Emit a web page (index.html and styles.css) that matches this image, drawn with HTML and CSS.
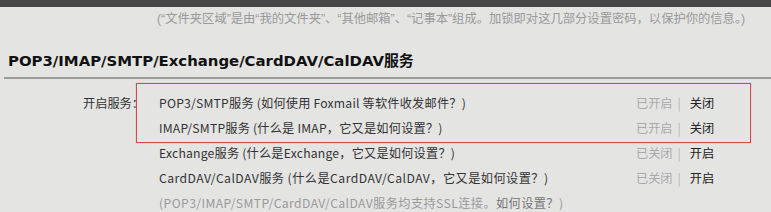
FILE: index.html
```html
<!DOCTYPE html>
<html lang="zh-CN">
<head>
<meta charset="utf-8">
<title>POP3/IMAP/SMTP/Exchange/CardDAV/CalDAV服务</title>
<link rel="stylesheet" href="styles.css">
</head>
<body>
<div class="page">
  <div class="topbar"></div>
  <div class="note">(“文件夹区域”是由“我的文件夹”、“其他邮箱”、“记事本”组成。加锁即对这几部分设置密码，以保护你的信息。)</div>
  <h2 class="section-title">POP3/IMAP/SMTP/Exchange/CardDAV/CalDAV服务</h2>
  <div class="services">
    <div class="label">开启服务：</div>
    <div class="list">
      <div class="row">
        <span class="name">POP3/SMTP服务 (如何使用 Foxmail 等软件收发邮件？)</span>
        <span class="status"><span class="state">已开启</span><span class="sep">|</span><span class="action">关闭</span></span>
      </div>
      <div class="row">
        <span class="name">IMAP/SMTP服务 (什么是 IMAP，它又是如何设置？)</span>
        <span class="status"><span class="state">已开启</span><span class="sep">|</span><span class="action">关闭</span></span>
      </div>
      <div class="row">
        <span class="name">Exchange服务 (什么是Exchange，它又是如何设置？)</span>
        <span class="status"><span class="state">已关闭</span><span class="sep">|</span><span class="action">开启</span></span>
      </div>
      <div class="row">
        <span class="name wide">CardDAV/CalDAV服务 (什么是CardDAV/CalDAV，它又是如何设置？)</span>
        <span class="status"><span class="state">已关闭</span><span class="sep">|</span><span class="action">开启</span></span>
      </div>
      <div class="row hint">(POP3/IMAP/SMTP/CardDAV/CalDAV服务均支持SSL连接。<span class="hint-link">如何设置？</span>)</div>
    </div>
  </div>
  <div class="highlight"></div>
</div>
</body>
</html>
```

FILE: styles.css
```css
html, body {
  margin: 0;
  padding: 0;
  background: #e4e4e3;
}

.page {
  position: relative;
  width: 771px;
  height: 212px;
  overflow: hidden;
  background: #e4e4e3;
  font-family: "Noto Sans CJK SC", "Noto Sans", sans-serif;
  font-size: 12.2px;
  letter-spacing: 0.2px;
  color: #333;
}

.topbar {
  height: 7px;
  background: #474747;
}

.note {
  padding-left: 157px;
  height: 24px;
  line-height: 24px;
  color: #9a9a9a;
  font-family: "Liberation Sans", "Noto Sans CJK SC", sans-serif;
  font-size: 12.3px;
  letter-spacing: 0;
  white-space: nowrap;
}

.section-title {
  margin: 0 0 0 4px;
  padding: 20px 0 6px 4px;
  line-height: 20px;
  font-family: "DejaVu Sans", "Noto Sans CJK SC", sans-serif;
  font-weight: bold;
  font-size: 14.9px;
  letter-spacing: 0;
  color: #111;
  border-bottom: 2px solid #9c9c9c;
  white-space: nowrap;
}

.services {
  display: flex;
  margin-top: 12px;
  padding-left: 83px;
  gap: 15px;
}

.label {
  width: 61px;
  line-height: 25px;
  text-align: right;
  white-space: nowrap;
  letter-spacing: 0;
  color: #333;
}

.list {
  display: flex;
  flex-direction: column;
}

.row {
  display: flex;
  height: 25px;
  line-height: 25px;
  white-space: nowrap;
}

.name {
  width: 477px;
}

.name.wide {
  letter-spacing: 0.45px;
}

.status {
  display: flex;
  letter-spacing: 0;
}

.state {
  color: #aaa;
}

.sep {
  color: #b5b5b5;
  margin: 0 9px 0 5px;
}

.action {
  color: #222;
}

.hint {
  color: #9a9a9a;
  letter-spacing: 0.4px;
}

.hint-link {
  color: #777;
}

.highlight {
  position: absolute;
  left: 136px;
  top: 83px;
  width: 613px;
  height: 58px;
  border: 1px solid #d9464c;
  box-shadow: 0 0 1px rgba(217, 70, 76, 0.5);
}
```
